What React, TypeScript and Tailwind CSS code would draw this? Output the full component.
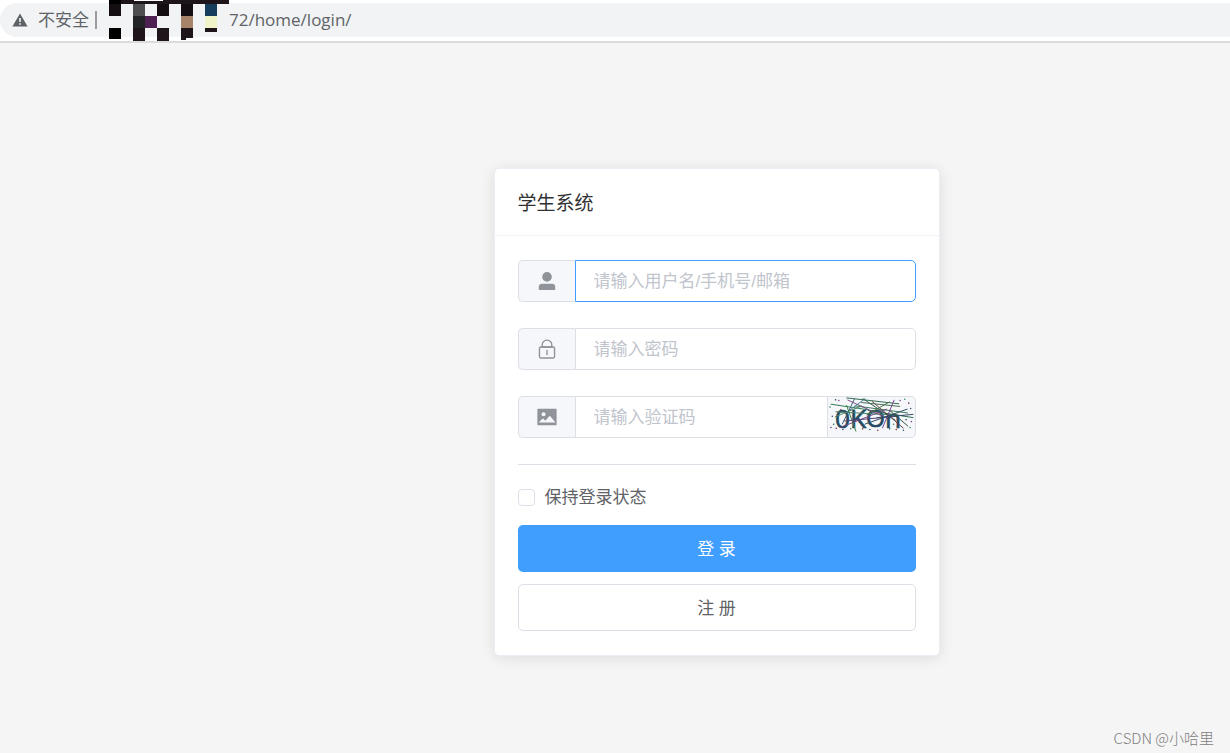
import { useState } from "react";

interface IconProps {
  paths: string[];
}

interface FieldProps {
  id: string;
  label: string;
  type?: string;
  value: string;
  onChange: (value: string) => void;
  icon: string[];
  active?: boolean;
  children?: React.ReactNode;
}

const userIcon = [
  "M288 320a224 224 0 1 0 448 0 224 224 0 1 0-448 0m544 608H160a32 32 0 0 1-32-32v-96a160 160 0 0 1 160-160h448a160 160 0 0 1 160 160v96a32 32 0 0 1-32 32z",
];

const lockIcon = [
  "M224 448a32 32 0 0 0-32 32v384a32 32 0 0 0 32 32h576a32 32 0 0 0 32-32V480a32 32 0 0 0-32-32zm0-64h576a96 96 0 0 1 96 96v384a96 96 0 0 1-96 96H224a96 96 0 0 1-96-96V480a96 96 0 0 1 96-96",
  "M512 544a32 32 0 0 1 32 32v192a32 32 0 1 1-64 0V576a32 32 0 0 1 32-32m192-160v-64a192 192 0 1 0-384 0v64zM512 64a256 256 0 0 1 256 256v128H256V320A256 256 0 0 1 512 64",
];

const pictureIcon = [
  "M96 896a32 32 0 0 1-32-32V160a32 32 0 0 1 32-32h832a32 32 0 0 1 32 32v704a32 32 0 0 1-32 32zm315.52-228.48-68.928-68.928a32 32 0 0 0-45.248 0L128 768.064h778.688l-242.112-290.56a32 32 0 0 0-49.216 0L458.752 665.408a32 32 0 0 1-47.232 2.112M256 384a96 96 0 1 0 192.064-.064A96 96 0 0 0 256 384",
];

// x, y, width, height, color
const mosaic: [number, number, number, number, string][] = [
  [0, 0, 12, 4, "#000000"],
  [12, 0, 108, 4, "#1e151b"],
  [25, 0, 29, 1, "#ffffff"],
  [0, 4, 12, 12, "#140d12"],
  [24, 4, 12, 12, "#4e4e50"],
  [48, 4, 12, 12, "#140d12"],
  [72, 4, 12, 12, "#140d12"],
  [96, 4, 12, 12, "#153d5c"],
  [24, 16, 12, 12, "#222427"],
  [36, 16, 12, 12, "#4e2252"],
  [72, 16, 12, 12, "#a78469"],
  [96, 16, 12, 12, "#f0f2c8"],
  [0, 28, 12, 11, "#000000"],
  [24, 28, 12, 13, "#1e151b"],
  [48, 28, 12, 13, "#1e151b"],
  [72, 28, 12, 10, "#1e151b"],
  [72, 38, 5, 2, "#1e151b"],
  [96, 28, 12, 4, "#1e151b"],
];

// x1, y1, x2, y2, color
const noiseLines: [number, number, number, number, string][] = [
  [95, 38, 255, 56, "#2f6b4f"],
  [120, 62, 282, 84, "#3f7a5c"],
  [47, 57, 160, 74, "#2f7a55"],
  [62, 80, 270, 92, "#45806a"],
  [160, 76, 298, 98, "#2f6b4f"],
  [98, 44, 206, 94, "#7a4a86"],
  [120, 40, 82, 118, "#3c5f7c"],
  [152, 40, 96, 82, "#477a93"],
  [95, 60, 124, 140, "#3d7a4c"],
  [240, 44, 204, 130, "#7b4592"],
  [144, 40, 244, 106, "#355c52"],
  [172, 48, 268, 130, "#6a3f46"],
  [76, 128, 218, 72, "#6f4a7e"],
  [88, 108, 246, 94, "#5c3b7a"],
  [150, 118, 280, 72, "#2f4c5f"],
  [186, 98, 298, 88, "#374b66"],
  [140, 52, 258, 64, "#4b6b52"],
  [156, 90, 226, 50, "#466b46"],
  [60, 96, 142, 62, "#4d8063"],
  [226, 76, 282, 124, "#3a4f48"],
];

const noiseDots: [number, number, string][] = [
  [45, 66, "#3c8a5a"], [52, 94, "#34507c"], [56, 118, "#2f6b4f"], [64, 130, "#7a2f4a"],
  [48, 128, "#5c3b7a"], [72, 46, "#7a4a86"], [62, 44, "#355c52"], [84, 134, "#34507c"],
  [108, 132, "#3c8a5a"], [144, 132, "#6a3f46"], [166, 134, "#34507c"], [190, 136, "#7a2f4a"],
  [226, 132, "#2f6b4f"], [246, 134, "#7a2f4a"], [268, 136, "#34507c"], [288, 128, "#3c8a5a"],
  [292, 110, "#7a4a86"], [276, 104, "#355c52"], [290, 70, "#34507c"], [272, 42, "#3c8a5a"],
  [258, 46, "#7a4a86"], [284, 54, "#6a3f46"], [238, 118, "#3c8a5a"], [78, 74, "#7a2f4a"],
];

function Icon({ paths }: IconProps) {
  return (
    <svg viewBox="0 0 1024 1024" className="size-[22px]" fill="currentColor" aria-hidden="true">
      {paths.map(d => (
        <path key={d} d={d} />
      ))}
    </svg>
  );
}

function Captcha() {
  return (
    <svg viewBox="39 36 264 120" className="h-10 w-[87px]" role="img" aria-label="验证码">
      <g fill="#234a60" stroke="#234a60" strokeWidth="2" fontFamily="'Open Sans', sans-serif" fontSize="80">
        <text x="60" y="130">0</text>
        <text x="106" y="130">K</text>
        <text x="154" y="127" fontSize="74">O</text>
        <text x="212" y="130" fontSize="80">n</text>
      </g>
      {noiseLines.map(([x1, y1, x2, y2, color], i) => (
        <line key={i} x1={x1} y1={y1} x2={x2} y2={y2} stroke={color} strokeWidth="3" />
      ))}
      {noiseDots.map(([x, y, color], i) => (
        <circle key={i} cx={x} cy={y} r="2.4" fill={color} />
      ))}
    </svg>
  );
}

function AddressBar() {
  return (
    <header className="border-b-2 border-[#dcdcdc] bg-white">
      <div className="flex h-[41px] items-start">
        <div className="mt-[3px] flex h-[34px] w-full items-center rounded-l-full bg-[#f1f3f4] pl-3 text-[17px] text-[#5f6368]">
          <svg viewBox="0 0 16 14" className="h-3.5 w-4 shrink-0" aria-hidden="true">
            <path d="M8 0.5 15.6 13.5H0.4z" fill="#5f6368" />
            <path d="M7.2 5h1.6v4H7.2zM7.2 10.2h1.6v1.6H7.2z" fill="#f1f3f4" />
          </svg>
          <span className="ml-2.5 shrink-0 pt-0.5">不安全</span>
          <span className="mx-1.5 h-[18px] w-0.5 shrink-0 bg-[#9a9c9f]" />
          <svg viewBox="0 0 120 41" className="ml-1.5 h-[41px] w-[120px] shrink-0" shapeRendering="crispEdges" aria-hidden="true">
            {mosaic.map(([x, y, w, h, color], i) => (
              <rect key={i} x={x} y={y} width={w} height={h} fill={color} />
            ))}
          </svg>
          <span className="font-['Open_Sans',sans-serif]">72/home/login/</span>
        </div>
      </div>
    </header>
  );
}

function Field({ id, label, type = "text", value, onChange, icon, active, children }: FieldProps) {
  return (
    <div className="flex h-[42px]">
      <label
        htmlFor={id}
        aria-label={label}
        className="flex w-[57px] shrink-0 items-center justify-center rounded-l-[5px] border border-r-0 border-[#dcdfe6] bg-[#f5f7fa] text-[#909399]"
      >
        <Icon paths={icon} />
      </label>
      <input
        id={id}
        type={type}
        placeholder={label}
        value={value}
        onChange={e => onChange(e.target.value)}
        className={`min-w-0 flex-1 border bg-white px-[18px] pt-0.5 text-[17px] text-[#606266] outline-none placeholder:text-[#c0c4cc] ${
          active ? "border-[#409eff]" : "border-[#dcdfe6]"
        } ${children ? "" : "rounded-r-[5px]"}`}
      />
      {children && (
        <div className="shrink-0 overflow-hidden rounded-r-[5px] border border-l-0 border-[#dcdfe6] bg-[#f5f7fa]">
          {children}
        </div>
      )}
    </div>
  );
}

export default function App() {
  const [username, setUsername] = useState("");
  const [password, setPassword] = useState("");
  const [code, setCode] = useState("");
  const [remember, setRemember] = useState(false);

  return (
    <div className="relative flex min-h-screen flex-col bg-[#f5f5f5] font-['Liberation_Sans','Noto_Sans_CJK_SC',sans-serif]">
      <AddressBar />
      <main className="flex flex-1 items-start justify-center pt-[125px] pb-12 pl-[203px]">
        <section className="w-full max-w-[446px] rounded-[5px] border border-[#ebeef5] bg-white shadow-[0_2px_14px_rgba(0,0,0,0.1)]">
          <h1 className="border-b border-[#f0f2f5] px-[23px] pt-[22px] pb-[18px] text-[19px] leading-[26px] text-[#303133]">
            学生系统
          </h1>
          <form className="px-[23px] py-6" onSubmit={e => e.preventDefault()}>
            <div className="flex flex-col gap-[26px]">
              <Field id="username" label="请输入用户名/手机号/邮箱" value={username} onChange={setUsername} icon={userIcon} active />
              <Field id="password" label="请输入密码" type="password" value={password} onChange={setPassword} icon={lockIcon} />
              <Field id="code" label="请输入验证码" value={code} onChange={setCode} icon={pictureIcon}>
                <Captcha />
              </Field>
              <hr className="border-[#dcdfe6]" />
            </div>
            <label className="flex h-[60px] items-center gap-2.5 pt-1 text-[17px] text-[#606266]">
              <input
                type="checkbox"
                checked={remember}
                onChange={e => setRemember(e.target.checked)}
                className="size-[17px] appearance-none rounded-sm border border-[#dcdfe6] bg-white checked:border-[#409eff] checked:bg-[#409eff]"
              />
              <span className="pt-0.5">保持登录状态</span>
            </label>
            <div className="flex flex-col gap-3">
              <button type="submit" className="h-[47px] rounded-[5px] bg-[#409eff] pt-0.5 text-[17px] text-white hover:bg-[#66b1ff]">
                登 录
              </button>
              <button type="button" className="h-[47px] rounded-[5px] border border-[#dcdfe6] bg-white pt-0.5 text-[17px] text-[#606266]">
                注 册
              </button>
            </div>
          </form>
        </section>
      </main>
      <footer className="absolute right-4 bottom-1 font-['Noto_Sans_CJK_SC',sans-serif] text-[15px] font-light text-[#808080]">
        CSDN @小哈里
      </footer>
    </div>
  );
}
